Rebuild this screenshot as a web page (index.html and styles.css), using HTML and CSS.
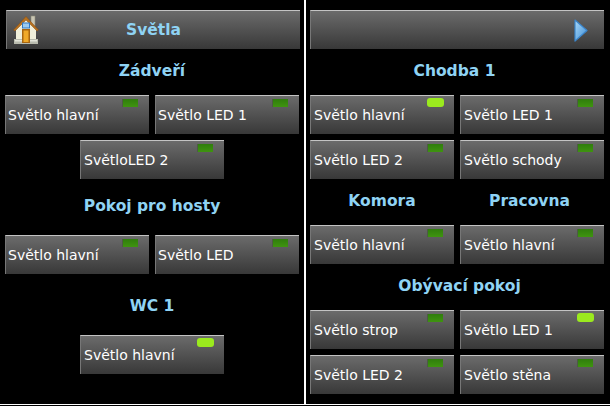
FILE: index.html
```html
<!DOCTYPE html>
<html lang="cs">
<head>
<meta charset="utf-8">
<title>Světla</title>
<link rel="stylesheet" href="styles.css">
</head>
<body>
<main class="screen">
  <section class="panel panel-left">
    <header class="topbar topbar-left">
      <svg class="home" width="26" height="30" viewBox="0 0 26 30">
        <rect x="18" y="1" width="4" height="10" fill="#c9c6b4" stroke="#8d8a78" stroke-width=".6"/>
        <path d="M3 14 13 4l10 10v12H3z" fill="#efeeda"/>
        <path d="M.5 15 13 1.5 25.5 15l-1.5 1L13 5 2 16z" fill="#b5701f" stroke="#8a4f12" stroke-width=".5"/>
        <rect x="1" y="24" width="24" height="5" fill="#b9bbae"/>
        <rect x="2" y="25" width="22" height="1.5" fill="#e4e5da"/>
        <rect x="9" y="14" width="8" height="14" fill="#a8650f"/>
        <rect x="10.5" y="15.5" width="5" height="11.5" fill="#f0a928"/>
        <rect x="9.5" y="8" width="7" height="5" fill="#9ccbf0" stroke="#2f78c8" stroke-width="1"/>
      </svg>
      <span class="topbar-title">Světla</span>
    </header>

    <h2 class="title">Zádveří</h2>
    <div class="row">
      <button class="btn">Světlo hlavní<i class="led"></i></button>
      <button class="btn">Světlo LED 1<i class="led"></i></button>
      <button class="btn btn-wide">SvětloLED 2<i class="led"></i></button>
    </div>

    <h2 class="title title-mid">Pokoj pro hosty</h2>
    <div class="row">
      <button class="btn">Světlo hlavní<i class="led"></i></button>
      <button class="btn">Světlo LED<i class="led"></i></button>
    </div>

    <h2 class="title title-tall">WC 1</h2>
    <div class="row">
      <button class="btn btn-wide">Světlo hlavní<i class="led on"></i></button>
    </div>
  </section>

  <section class="panel panel-right">
    <header class="topbar topbar-right">
      <svg class="arrow" width="14" height="23" viewBox="0 0 14 23">
        <defs>
          <linearGradient id="arrowFill" x1="0" y1="0" x2="1" y2="1">
            <stop offset="0" stop-color="#a9d8f8"/>
            <stop offset="1" stop-color="#3f8fd6"/>
          </linearGradient>
        </defs>
        <path d="M1 1 13 11.5 1 22z" fill="url(#arrowFill)" stroke="#3b86cc" stroke-width="1.2" stroke-linejoin="round"/>
      </svg>
    </header>

    <h2 class="title title-left">Chodba 1</h2>
    <div class="row">
      <button class="btn">Světlo hlavní<i class="led on"></i></button>
      <button class="btn">Světlo LED 1<i class="led"></i></button>
      <button class="btn">Světlo LED 2<i class="led"></i></button>
      <button class="btn">Světlo schody<i class="led"></i></button>
    </div>

    <div class="row row-titles">
      <h2 class="title">Komora</h2>
      <h2 class="title title-left">Pracovna</h2>
    </div>
    <div class="row">
      <button class="btn">Světlo hlavní<i class="led"></i></button>
      <button class="btn">Světlo hlavní<i class="led"></i></button>
    </div>

    <h2 class="title title-right">Obývací pokoj</h2>
    <div class="row">
      <button class="btn">Světlo strop<i class="led"></i></button>
      <button class="btn">Světlo LED 1<i class="led on"></i></button>
      <button class="btn">Světlo LED 2<i class="led"></i></button>
      <button class="btn">Světlo stěna<i class="led"></i></button>
    </div>
  </section>
</main>
</body>
</html>
```

FILE: styles.css
```css
html, body {
  margin: 0;
  padding: 0;
  background: #000;
}

.screen {
  display: flex;
  width: 610px;
  height: 405px;
  box-sizing: border-box;
  border-bottom: 1px solid #fff;
  margin-bottom: 1px;
  overflow: hidden;
  font-family: "DejaVu Sans", Verdana, sans-serif;
}

.panel {
  box-sizing: border-box;
  padding-top: 10px;
}

.panel-left {
  width: 306px;
  padding-left: 5px;
  border-right: 2px solid #fff;
}

.panel-right {
  width: 304px;
  padding-left: 4px;
}

.topbar {
  position: relative;
  display: flex;
  align-items: center;
  justify-content: center;
  box-sizing: border-box;
  height: 39px;
  width: 294px;
  background: linear-gradient(#6b6b6b, #383838);
  border-top: 1px solid #c4c4c4;
  border-left: 1px solid #777;
}

.topbar-left {
  margin-left: 1px;
}

.topbar-title {
  font-size: 15.5px;
  font-weight: bold;
  color: #8fd3f4;
}

.home {
  position: absolute;
  left: 6px;
  top: 4px;
}

.arrow {
  position: absolute;
  left: 263px;
  top: 8px;
}

.title {
  box-sizing: border-box;
  display: flex;
  align-items: center;
  justify-content: center;
  width: 294px;
  height: 46px;
  margin: 0;
  padding-bottom: 2px;
  font-size: 15.5px;
  font-weight: bold;
  color: #8fd3f4;
}

.title-mid {
  height: 56px;
}

.title-tall {
  height: 61px;
  padding-bottom: 0;
  padding-top: 2px;
}

.title-left {
  padding-right: 5px;
}

.title-right {
  padding-left: 5px;
}

.row {
  display: grid;
  grid-template-columns: 144px 144px;
  gap: 6px;
  justify-content: start;
  width: 294px;
}

.row-titles .title {
  width: 144px;
}

.btn {
  position: relative;
  box-sizing: border-box;
  height: 39px;
  margin: 0;
  padding: 0 0 0 2px;
  text-align: left;
  font-family: inherit;
  font-size: 14px;
  color: #fff;
  background: linear-gradient(#6b6b6b, #383838);
  border: 0;
  border-top: 1px solid #c4c4c4;
  border-left: 1px solid #777;
  border-radius: 0;
}

.panel-right .btn,
.btn-wide {
  padding-left: 3px;
}

.btn-wide {
  grid-column: 1 / -1;
  justify-self: center;
  width: 144px;
}

.led {
  position: absolute;
  top: 3px;
  right: 11px;
  width: 15px;
  height: 8px;
  background: linear-gradient(#2f7d0c, #3f9410);
  border-left: 1px solid #4d5a45;
}

.led.on {
  top: 2px;
  right: 10px;
  width: 17px;
  height: 9px;
  border-left: 0;
  border-radius: 3px;
  background: #9bea1e;
}
```
